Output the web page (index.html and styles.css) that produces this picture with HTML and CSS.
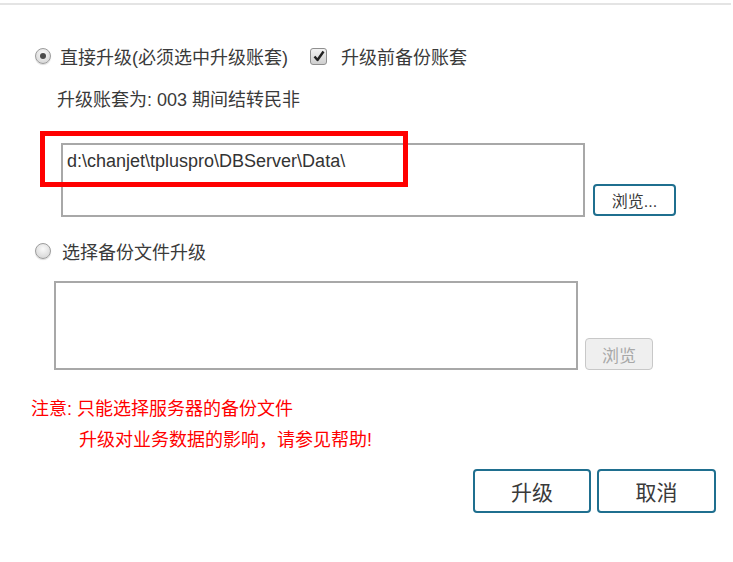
FILE: index.html
```html
<!DOCTYPE html>
<html lang="zh">

<head>
    <meta charset="UTF-8">
    <meta name="viewport" content="width=device-width, initial-scale=1.0">
    <title>升级账套</title>
    <link rel="stylesheet" href="styles.css">
</head>

<body>
    <div class="topline"></div>
    <div class="dialog">
        <div class="row row-first">
            <span class="radio checked"></span>
            <span class="label">直接升级(必须选中升级账套)</span>
            <span class="checkbox">
                <svg width="12" height="12" viewBox="0 0 12 12">
                    <path d="M1.5 6.5 L4.5 10 L10.5 1.5" fill="none" stroke="#222" stroke-width="2.4" stroke-linejoin="round"/>
                </svg>
            </span>
            <span class="label">升级前备份账套</span>
        </div>
        <div class="row row-info">升级账套为: 003 期间结转民非</div>

        <div class="field field-one">
            <div class="box">d:\chanjet\tpluspro\DBServer\Data\</div>
            <button class="btn-browse">浏览...</button>
            <div class="mark"></div>
        </div>

        <div class="row row-second">
            <span class="radio"></span>
            <span class="label">选择备份文件升级</span>
        </div>

        <div class="field field-two">
            <div class="box box-tall"></div>
            <button class="btn-browse disabled" disabled>浏览</button>
        </div>

        <div class="notice">
            <p>注意: 只能选择服务器的备份文件</p>
            <p class="indent">升级对业务数据的影响，请参见帮助!</p>
        </div>

        <div class="actions">
            <button class="btn-main">升级</button>
            <button class="btn-main">取消</button>
        </div>
    </div>
</body>

</html>
```

FILE: styles.css
```css
body {
    font-family: "Liberation Sans", "Noto Sans CJK SC", sans-serif;
    background-color: #fff;
    color: #3a3a3a;
    margin: 0;
    padding: 0;
}

.topline {
    margin-top: 3px;
    width: 731px;
    height: 2px;
    background-color: #e4e4e4;
}

.dialog {
    font-size: 18px;
}

.row {
    display: flex;
    align-items: center;
    height: 22px;
}

.row-first {
    margin-top: 40px;
    padding-left: 35px;
}

.row-first .checkbox {
    margin-left: 22px;
    margin-right: 14px;
}

.row-info {
    margin-top: 20px;
    padding-left: 57px;
}

.radio {
    width: 16px;
    height: 16px;
    border-radius: 50%;
    border: 1px solid #9c9c9c;
    background: radial-gradient(circle at 50% 35%, #fafafa, #cfcfcf);
    box-shadow: 0 1px 1px rgba(0, 0, 0, 0.15);
    box-sizing: border-box;
    margin-right: 9px;
    position: relative;
    flex-shrink: 0;
}

.radio.checked::after {
    content: "";
    position: absolute;
    left: 4px;
    top: 4px;
    width: 6px;
    height: 6px;
    border-radius: 50%;
    background-color: #4a4a4a;
}

.checkbox {
    width: 17px;
    height: 17px;
    border: 1px solid #8f8f8f;
    border-radius: 3px;
    background: linear-gradient(#f2f2f2, #cfcfcf);
    box-sizing: border-box;
    display: flex;
    align-items: center;
    justify-content: center;
    flex-shrink: 0;
}

.field {
    display: flex;
    align-items: flex-end;
    position: relative;
}

.field-one {
    margin-top: 34px;
    padding-left: 61px;
    gap: 8px;
}

.field-two {
    margin-top: 19px;
    padding-left: 54px;
    gap: 7px;
}

.box {
    width: 524px;
    height: 74px;
    border: 2px solid #a8a8a8;
    box-sizing: border-box;
    padding: 5px 4px;
    font-size: 18px;
    line-height: 22px;
    color: #333;
}

.box-tall {
    height: 89px;
}

.mark {
    position: absolute;
    left: 40px;
    top: -12px;
    width: 368px;
    height: 56px;
    border: 5px solid #ff0000;
    box-sizing: border-box;
}

.row-second {
    margin-top: 23px;
    padding-left: 35px;
}

.row-second .radio {
    margin-right: 11px;
}

button {
    font-family: "Liberation Sans", "Noto Sans CJK SC", sans-serif;
    background-color: #fff;
    color: #3a3a3a;
    cursor: pointer;
    padding: 0;
}

.btn-browse {
    width: 83px;
    height: 32px;
    border: 2px solid #1f6f8f;
    border-radius: 4px;
    font-size: 16px;
    margin-bottom: 1px;
}

.btn-browse.disabled {
    width: 68px;
    border: 1px solid #c8c8c8;
    background-color: #efefef;
    color: #a8a8a8;
    font-size: 17px;
    margin-bottom: 0;
    cursor: default;
}

.notice {
    margin-top: 28px;
    padding-left: 31px;
    color: #ff0000;
}

.notice p {
    margin: 0;
    line-height: 22px;
}

.notice .indent {
    margin-top: 9px;
    padding-left: 48px;
}

.actions {
    display: flex;
    gap: 6px;
    margin-top: 18px;
    padding-left: 473px;
}

.btn-main {
    width: 118px;
    height: 44px;
    border: 2px solid #1f6f8f;
    border-radius: 4px;
    font-size: 21px;
}

.btn-main + .btn-main {
    width: 119px;
}
```
